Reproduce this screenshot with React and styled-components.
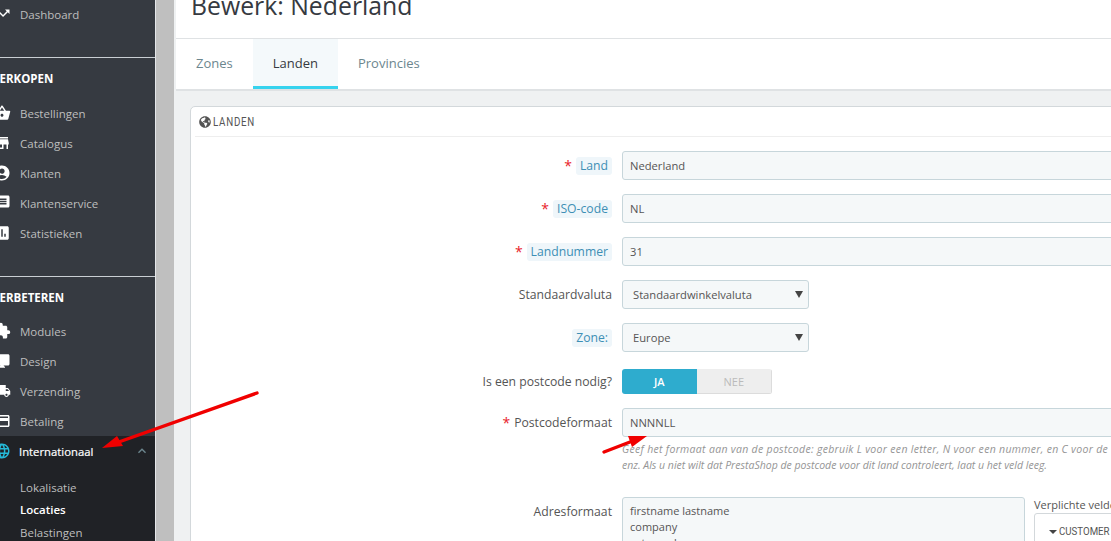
import React from 'react'
import styled, { createGlobalStyle } from 'styled-components'
import {
  MdTrendingUp, MdShoppingBasket, MdStore, MdAccountCircle, MdMessage, MdAssessment,
  MdExtension, MdDesktopMac, MdLocalShipping, MdCreditCard, MdLanguage, MdExpandLess,
} from 'react-icons/md'
import { FaGlobeAmericas } from 'react-icons/fa'

const GlobalStyle = createGlobalStyle`
  html, body { margin: 0; padding: 0; height: 100%; overflow: hidden; }
  body { font-family: "Open Sans", "Liberation Sans", sans-serif; background: #fff; }
  * { box-sizing: border-box; }
`

const salesItems = [
  ['Bestellingen', MdShoppingBasket],
  ['Catalogus', MdStore],
  ['Klanten', MdAccountCircle],
  ['Klantenservice', MdMessage],
  ['Statistieken', MdAssessment],
]

const improveItems = [
  ['Modules', MdExtension],
  ['Design', MdDesktopMac],
  ['Verzending', MdLocalShipping],
  ['Betaling', MdCreditCard],
]

const App = () => (
  <Page>
    <GlobalStyle />
    <Sidebar>
      <NavSection $height={57} $top={0}>
        <NavItem $first><NavIcon $first><MdTrendingUp /></NavIcon>Dashboard</NavItem>
      </NavSection>
      <NavSection $height={219} $top={8}>
        <NavHeading $gap={8}>VERKOPEN</NavHeading>
        {salesItems.map(([label, Icon]) => (
          <NavItem key={label}><NavIcon><Icon /></NavIcon>{label}</NavItem>
        ))}
      </NavSection>
      <NavSection $top={8}>
        <NavHeading $gap={7}>VERBETEREN</NavHeading>
        {improveItems.map(([label, Icon]) => (
          <NavItem key={label}><NavIcon><Icon /></NavIcon>{label}</NavItem>
        ))}
        <OpenGroup>
          <OpenItem>
            <GlobeIcon><MdLanguage /></GlobeIcon>
            Internationaal
            <Chevron><MdExpandLess /></Chevron>
          </OpenItem>
          <SubItem>Lokalisatie</SubItem>
          <SubItem $active>Locaties</SubItem>
          <SubItem>Belastingen</SubItem>
        </OpenGroup>
      </NavSection>
    </Sidebar>
    <Gutter />
    <Main>
      <Header><Title>Bewerk: Nederland</Title></Header>
      <Tabs>
        <Tab>Zones</Tab>
        <Tab $active>Landen</Tab>
        <Tab>Provincies</Tab>
      </Tabs>
      <Content>
        <Panel>
          <PanelHeading><FaGlobeAmericas /><span>LANDEN</span></PanelHeading>
          <Form>
            <Row>
              <Label><Star>*</Star><Hint>Land</Hint></Label>
              <Input>Nederland</Input>
            </Row>
            <Row>
              <Label><Star>*</Star><Hint>ISO-code</Hint></Label>
              <Input>NL</Input>
            </Row>
            <Row>
              <Label><Star>*</Star><Hint>Landnummer</Hint></Label>
              <Input>31</Input>
            </Row>
            <Row>
              <Label>Standaardvaluta</Label>
              <Select>Standaardwinkelvaluta</Select>
            </Row>
            <Row>
              <Label><Hint>Zone:</Hint></Label>
              <Select>Europe</Select>
            </Row>
            <Row $compact>
              <Label $h={25}>Is een postcode nodig?</Label>
              <Switch>
                <SwitchPart $on>JA</SwitchPart>
                <SwitchPart>NEE</SwitchPart>
              </Switch>
            </Row>
            <Row>
              <Label><Star>*</Star>Postcodeformaat</Label>
              <FieldStack>
                <Input>NNNNLL</Input>
                <Help>
                  <HelpLine $wide>Geef het formaat aan van de postcode: gebruik L voor een letter, N voor een nummer, en C voor de</HelpLine>
                  <HelpLine>enz. Als u niet wilt dat PrestaShop de postcode voor dit land controleert, laat u het veld leeg.</HelpLine>
                </Help>
              </FieldStack>
            </Row>
            <AddressRow>
              <Label>Adresformaat</Label>
              <Textarea>firstname lastname<br />company<br />vat_number</Textarea>
              <Required>
                <RequiredTitle>Verplichte velden</RequiredTitle>
                <RequiredBox><Caret /><span>CUSTOMER</span></RequiredBox>
              </Required>
            </AddressRow>
          </Form>
        </Panel>
      </Content>
    </Main>
    <Arrows viewBox="0 0 1111 541">
      <path d="M257 393 L116 443" stroke="#f00000" strokeWidth="3.4" strokeLinecap="round" />
      <polygon points="102,448 117,436 123,446" fill="#f00000" />
      <path d="M604 452 L630 442" stroke="#f00000" strokeWidth="3.4" strokeLinecap="round" />
      <polygon points="647,436 628,436 632,447" fill="#f00000" />
    </Arrows>
  </Page>
)

export default App

const Page = styled.div`
  position: relative;
  width: 1111px;
  height: 541px;
  display: flex;
  overflow: hidden;
  color: #555;
`

const Sidebar = styled.nav`
  flex: 0 0 156px;
  background: #363a41;
  border-right: 1px solid #e4e6e9;
  height: 541px;
  overflow: hidden;
`

const NavSection = styled.div`
  height: ${(p) => (p.$height ? `${p.$height}px` : 'auto')};
  padding-top: ${(p) => p.$top}px;
  & + & { border-top: 1px solid #c9ced3; }
`

const NavItem = styled.div`
  height: ${(p) => (p.$first ? 29 : 30)}px;
  display: flex;
  align-items: center;
  padding-left: 20px;
  position: relative;
  font-size: 11.5px;
  color: #bebebe;
`

const NavIcon = styled.span`
  position: absolute;
  left: -7px;
  top: ${(p) => (p.$first ? 5 : 6)}px;
  font-size: 18px;
  line-height: 0;
  color: #fff;
`

const NavHeading = styled.div`
  height: 24px;
  margin-left: -8px;
  margin-bottom: ${(p) => p.$gap}px;
  display: flex;
  align-items: center;
  font-size: 11.5px;
  font-weight: 700;
  color: #fff;
  white-space: nowrap;
`

const OpenGroup = styled.div`
  background: #202226;
  padding-bottom: 10px;
`

const OpenItem = styled(NavItem)`
  margin-bottom: 10px;
  padding-left: 19px;
  font-size: 11.3px;
  font-weight: 400;
  color: #fff;
  -webkit-text-stroke: 0.2px #fff;
`

const GlobeIcon = styled(NavIcon)`
  color: #25b9d7;
`

const Chevron = styled.span`
  position: absolute;
  left: 134px;
  top: 7px;
  font-size: 16px;
  line-height: 0;
  color: #6c868e;
`

const SubItem = styled.div`
  height: 22.5px;
  display: flex;
  align-items: center;
  padding-left: 20px;
  font-size: 11.5px;
  font-weight: ${(p) => (p.$active ? 600 : 400)};
  color: ${(p) => (p.$active ? '#fff' : '#bebebe')};
`

const Gutter = styled.div`
  flex: 0 0 18px;
  background: #bfbfbf;
`

const Main = styled.main`
  flex: 0 0 937px;
  min-width: 0;
  display: flex;
  flex-direction: column;
  border-left: 2px solid #eff1f2;
  overflow: hidden;
`

const Header = styled.header`
  height: 39px;
  flex: none;
  border-bottom: 1px solid #dfe2e4;
  padding-left: 15px;
  display: flex;
  align-items: flex-end;
  overflow: hidden;
`

const Title = styled.h1`
  margin: 0 0 16px;
  font-size: 24.8px;
  font-weight: 400;
  line-height: 33px;
  color: #363a41;
  white-space: nowrap;
`

const Tabs = styled.div`
  height: 52px;
  flex: none;
  display: flex;
  border-bottom: 2px solid #dfe2e4;
`

const Tab = styled.div`
  height: 50px;
  padding: 0 20px;
  display: flex;
  align-items: center;
  font-size: 13px;
  color: ${(p) => (p.$active ? '#363a41' : '#6c868e')};
  background: ${(p) => (p.$active ? '#f4f9fb' : 'transparent')};
  border-bottom: 3px solid ${(p) => (p.$active ? '#36d3ee' : 'transparent')};
`

const Content = styled.div`
  flex: 1;
  background: #eff1f2;
  padding: 15px 0 0 14px;
`

const Panel = styled.section`
  width: 1000px;
  height: 600px;
  background: #fff;
  border: 1px solid #d3d8db;
  border-radius: 5px;
`

const PanelHeading = styled.div`
  height: 30px;
  margin: 0 0 0 4px;
  padding-left: 4px;
  border-bottom: 1px solid #eeeeee;
  display: flex;
  align-items: center;
  gap: 2px;
  color: #555;
  svg { font-size: 12px; }
  span {
    display: inline-block;
    font-family: "Roboto", sans-serif;
    font-size: 13px;
    letter-spacing: 1px;
    transform: scaleX(0.75);
    transform-origin: left center;
    color: #555;
  }
`

const Form = styled.div`
  padding-top: 14px;
  display: flex;
  flex-direction: column;
`

const Row = styled.div`
  display: flex;
  align-items: flex-start;
  margin-bottom: 14px;
  margin-top: ${(p) => (p.$compact ? 3 : 0)}px;
`

const AddressRow = styled(Row)`
  margin-top: 10px;
`

const Label = styled.div`
  flex: 0 0 421px;
  height: ${(p) => p.$h || 29}px;
  display: flex;
  align-items: center;
  justify-content: flex-end;
  margin-right: 10px;
  font-size: 12.2px;
  color: #555;
`

const Star = styled.span`
  color: #e8232a;
  margin-right: 4px;
  font-size: 14px;
`

const Hint = styled.span`
  padding: 1px 4px;
  background: #eff6fa;
  border-radius: 3px;
  color: #3d8fb5;
  line-height: 16px;
`

const Input = styled.div`
  width: 800px;
  height: 29px;
  padding: 0 7px;
  display: flex;
  align-items: center;
  background: #f5f8f9;
  border: 1px solid #c7d6db;
  border-radius: 3px;
  font-size: 11.2px;
  color: #555;
`

const Select = styled(Input)`
  position: relative;
  width: 187px;
  padding-left: 10px;
  &::after {
    content: "";
    position: absolute;
    right: 5px;
    top: 10px;
    border-left: 4.5px solid transparent;
    border-right: 4.5px solid transparent;
    border-top: 7px solid #444;
  }
`

const Switch = styled.div`
  width: 150px;
  height: 25px;
  display: flex;
  border-radius: 3px;
  overflow: hidden;
`

const SwitchPart = styled.div`
  flex: 1;
  display: flex;
  align-items: center;
  justify-content: center;
  font-size: 11px;
  font-weight: ${(p) => (p.$on ? 600 : 400)};
  color: ${(p) => (p.$on ? '#fff' : '#bbb')};
  background: ${(p) => (p.$on ? '#2eacce' : '#eeeeee')};
  border-right: ${(p) => (p.$on ? 'none' : '1px solid #dcdcdc')};
  border-bottom: ${(p) => (p.$on ? 'none' : '1px solid #dcdcdc')};
`

const FieldStack = styled.div`
  display: flex;
  flex-direction: column;
  gap: 4px;
`

const Help = styled.div`
  font-size: 10.5px;
  font-style: italic;
  line-height: 16px;
  color: #959595;
  white-space: nowrap;
`

const HelpLine = styled.div`
  letter-spacing: ${(p) => (p.$wide ? 0.31 : 0)}px;
`

const Textarea = styled.div`
  flex: 0 0 403px;
  height: 100px;
  padding: 5px 8px 5px 7px;
  background: #f5f8f9;
  border: 1px solid #c7d6db;
  border-radius: 3px;
  font-size: 11px;
  line-height: 16px;
  color: #555;
`

const Required = styled.div`
  margin-left: 9px;
`

const RequiredTitle = styled.div`
  font-size: 11px;
  line-height: 16px;
  color: #555;
`

const RequiredBox = styled.div`
  width: 200px;
  height: 60px;
  padding: 11px 0 0 14px;
  display: flex;
  align-items: flex-start;
  border: 1px solid #d3d8db;
  border-radius: 3px;
  font-family: "Roboto", sans-serif;
  font-size: 11px;
  color: #555;
  span:last-child {
    transform: scaleX(0.88);
    transform-origin: left center;
  }
`

const Caret = styled.span`
  margin: 5px 2px 0 0;
  border-left: 4px solid transparent;
  border-right: 4px solid transparent;
  border-top: 4px solid #444;
`

const Arrows = styled.svg`
  position: absolute;
  left: 0;
  top: 0;
  width: 1111px;
  height: 541px;
  pointer-events: none;
`
